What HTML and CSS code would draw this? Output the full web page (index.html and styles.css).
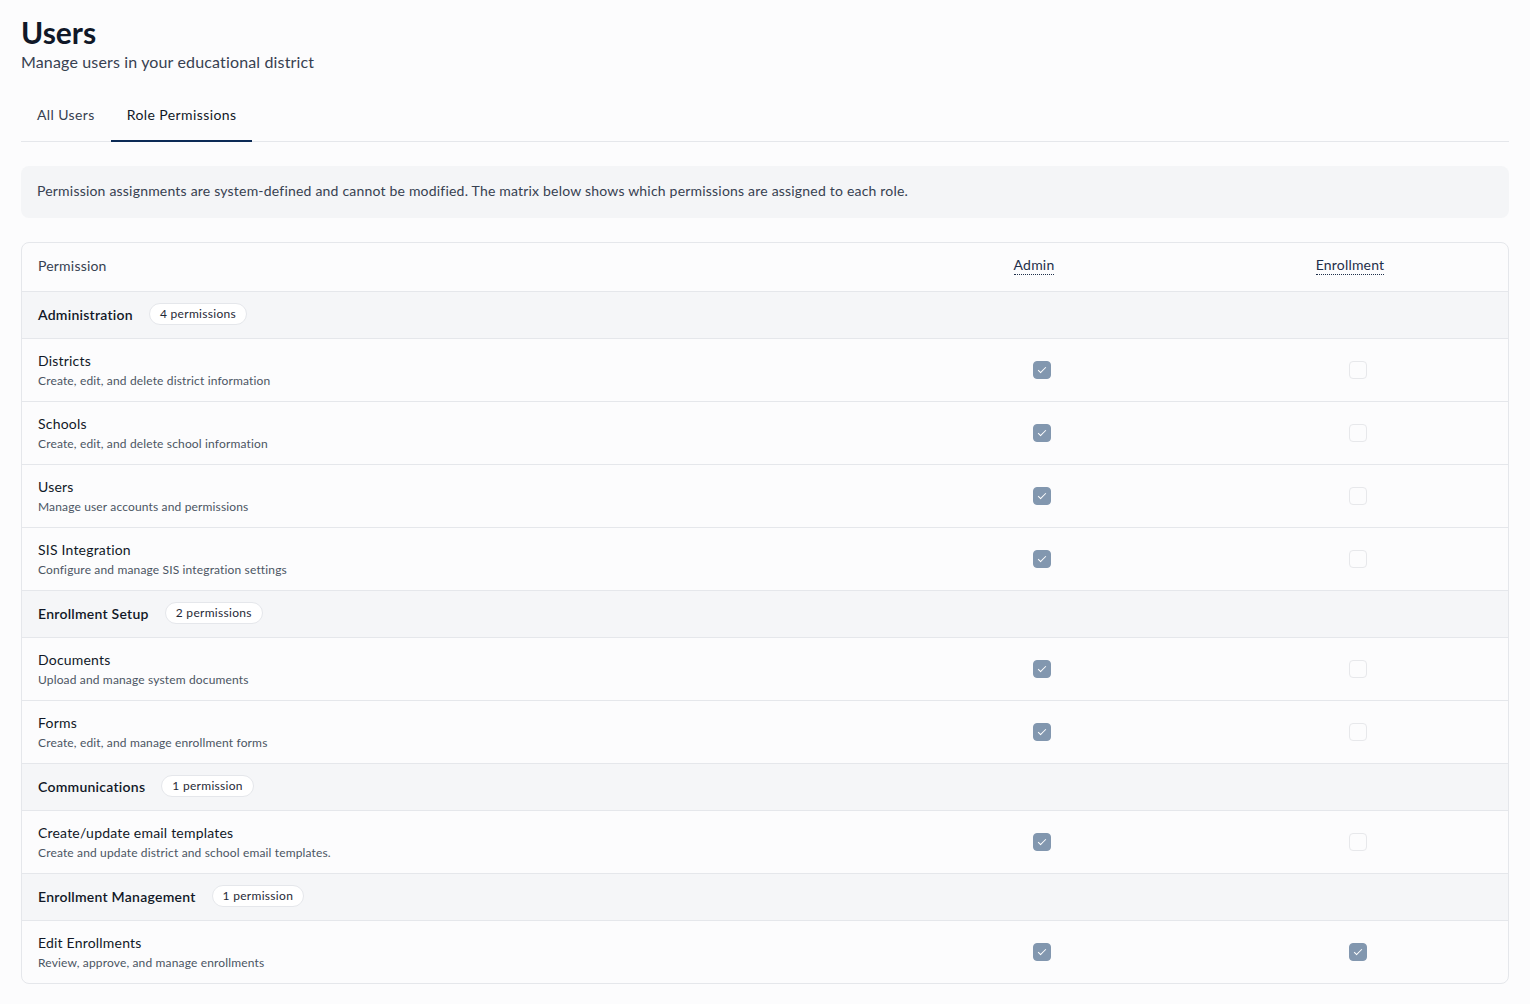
FILE: index.html
```html
<!DOCTYPE html>
<html lang="en">
<head>
    <meta charset="UTF-8">
    <meta name="viewport" content="width=device-width, initial-scale=1.0">
    <title>Users - Role Permissions</title>
    <link rel="stylesheet" href="styles.css">
</head>
<body>
    <div class="page">
        <h1>Users</h1>
        <p class="subtitle">Manage users in your educational district</p>

        <div class="tabs">
            <div class="tab">All Users</div>
            <div class="tab active">Role Permissions</div>
        </div>

        <div class="notice">
            Permission assignments are system-defined and cannot be modified. The matrix below shows which permissions are assigned to each role.
        </div>

        <div class="matrix">
            <div class="row head">
                <div class="cell name">Permission</div>
                <div class="cell role"><span class="role-title">Admin</span></div>
                <div class="cell role last"><span class="role-title">Enrollment</span></div>
            </div>

            <div class="row group">
                <div class="cell name"><span class="group-title">Administration</span><span class="badge">4 permissions</span></div>
            </div>
            <div class="row item">
                <div class="cell name">
                    <div class="item-title">Districts</div>
                    <div class="item-desc">Create, edit, and delete district information</div>
                </div>
                <div class="cell check"><span class="box on"></span></div>
                <div class="cell check last"><span class="box"></span></div>
            </div>
            <div class="row item">
                <div class="cell name">
                    <div class="item-title">Schools</div>
                    <div class="item-desc">Create, edit, and delete school information</div>
                </div>
                <div class="cell check"><span class="box on"></span></div>
                <div class="cell check last"><span class="box"></span></div>
            </div>
            <div class="row item">
                <div class="cell name">
                    <div class="item-title">Users</div>
                    <div class="item-desc">Manage user accounts and permissions</div>
                </div>
                <div class="cell check"><span class="box on"></span></div>
                <div class="cell check last"><span class="box"></span></div>
            </div>
            <div class="row item">
                <div class="cell name">
                    <div class="item-title">SIS Integration</div>
                    <div class="item-desc">Configure and manage SIS integration settings</div>
                </div>
                <div class="cell check"><span class="box on"></span></div>
                <div class="cell check last"><span class="box"></span></div>
            </div>

            <div class="row group">
                <div class="cell name"><span class="group-title">Enrollment Setup</span><span class="badge">2 permissions</span></div>
            </div>
            <div class="row item">
                <div class="cell name">
                    <div class="item-title">Documents</div>
                    <div class="item-desc">Upload and manage system documents</div>
                </div>
                <div class="cell check"><span class="box on"></span></div>
                <div class="cell check last"><span class="box"></span></div>
            </div>
            <div class="row item">
                <div class="cell name">
                    <div class="item-title">Forms</div>
                    <div class="item-desc">Create, edit, and manage enrollment forms</div>
                </div>
                <div class="cell check"><span class="box on"></span></div>
                <div class="cell check last"><span class="box"></span></div>
            </div>

            <div class="row group">
                <div class="cell name"><span class="group-title">Communications</span><span class="badge">1 permission</span></div>
            </div>
            <div class="row item">
                <div class="cell name">
                    <div class="item-title">Create/update email templates</div>
                    <div class="item-desc">Create and update district and school email templates.</div>
                </div>
                <div class="cell check"><span class="box on"></span></div>
                <div class="cell check last"><span class="box"></span></div>
            </div>

            <div class="row group">
                <div class="cell name"><span class="group-title">Enrollment Management</span><span class="badge">1 permission</span></div>
            </div>
            <div class="row item">
                <div class="cell name">
                    <div class="item-title">Edit Enrollments</div>
                    <div class="item-desc">Review, approve, and manage enrollments</div>
                </div>
                <div class="cell check"><span class="box on"></span></div>
                <div class="cell check last"><span class="box on"></span></div>
            </div>
        </div>
    </div>
</body>
</html>
```

FILE: styles.css
```css
body {
    margin: 0;
    background-color: #fcfcfd;
    font-family: Lato, "Noto Sans", sans-serif;
    color: #1f2937;
    letter-spacing: 0.15px;
}

.page {
    padding: 14px 21px 20px;
}

h1 {
    margin: 0;
    font-size: 30px;
    line-height: 36px;
    font-weight: 700;
    color: #101828;
    letter-spacing: 0;
}

.subtitle {
    margin: 0;
    font-size: 16px;
    line-height: 24px;
    color: #374151;
}

.tabs {
    display: flex;
    margin-top: 24px;
    border-bottom: 1px solid #e5e7eb;
}

.tab {
    padding: 7px 16px 15px;
    font-size: 14px;
    line-height: 20px;
    color: #374151;
    border-bottom: 2px solid transparent;
    margin-bottom: -1px;
    letter-spacing: 0.4px;
}

.tab.active {
    color: #111827;
    border-bottom-color: #0b2a55;
}

.notice {
    margin-top: 24px;
    padding: 15px 16px 17px;
    background-color: #f4f5f7;
    border-radius: 8px;
    font-size: 14px;
    line-height: 20px;
    color: #374151;
    letter-spacing: 0.2px;
}

.matrix {
    margin-top: 24px;
    border: 1px solid #e5e7eb;
    border-radius: 8px;
    overflow: hidden;
    background-color: #fcfcfd;
}

.row {
    display: grid;
    grid-template-columns: 1fr 316px 308px;
    border-bottom: 1px solid #e5e7eb;
}

.row:last-child {
    border-bottom: none;
}

.cell {
    display: flex;
    align-items: center;
}

.cell.name {
    padding: 0 16px;
}

.head {
    height: 48px;
    font-size: 14px;
    color: #374151;
    letter-spacing: 0.2px;
}

.head .cell {
    padding-bottom: 3px;
}

.cell.role {
    justify-content: center;
    padding-right: 16px;
}

.cell.last {
    padding-left: 8px;
}

.role-title {
    color: #1f2f4a;
    border-bottom: 1px dotted #1f2f4a;
    line-height: 18px;
}

.group {
    height: 46px;
    background-color: #f5f6f8;
}

.group .cell.name {
    grid-column: 1 / -1;
    padding-bottom: 2px;
}

.group-title {
    font-size: 14px;
    font-weight: 600;
    color: #111827;
    letter-spacing: 0.25px;
}

.badge {
    margin-left: 16px;
    padding: 2px 10px;
    font-size: 12px;
    line-height: 16px;
    background-color: #fff;
    border: 1px solid #e5e7eb;
    border-radius: 999px;
    color: #1f2937;
    letter-spacing: 0.3px;
}

.item {
    height: 62px;
}

.item .cell.name {
    flex-direction: column;
    align-items: flex-start;
    justify-content: center;
    padding-bottom: 1px;
}

.item-title {
    font-size: 14px;
    line-height: 20px;
    color: #111827;
    letter-spacing: 0.2px;
}

.item-desc {
    font-size: 12px;
    line-height: 16px;
    color: #4b5563;
    margin-top: 2px;
}

.cell.check {
    justify-content: center;
}

.box {
    width: 16px;
    height: 16px;
    border: 1px solid #e7e8eb;
    border-radius: 4px;
    position: relative;
}

.box.on {
    background-color: #8297af;
    border-color: #8297af;
}

.box.on::after {
    content: "";
    position: absolute;
    left: 5.5px;
    top: 3px;
    width: 3px;
    height: 7px;
    border: solid #fff;
    border-width: 0 1.2px 1.2px 0;
    transform: rotate(45deg);
}
```
